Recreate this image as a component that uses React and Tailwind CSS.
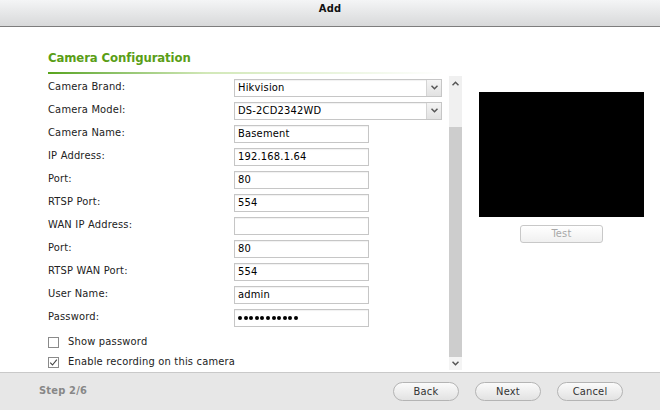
import React from 'react';

const font = { fontFamily: '"DejaVu Sans Condensed", "DejaVu Sans", Verdana, sans-serif' };

const rows = [
  { label: 'Camera Brand:', value: 'Hikvision', select: true },
  { label: 'Camera Model:', value: 'DS-2CD2342WD', select: true },
  { label: 'Camera Name:', value: 'Basement' },
  { label: 'IP Address:', value: '192.168.1.64' },
  { label: 'Port:', value: '80' },
  { label: 'RTSP Port:', value: '554' },
  { label: 'WAN IP Address:', value: '' },
  { label: 'Port:', value: '80' },
  { label: 'RTSP WAN Port:', value: '554' },
  { label: 'User Name:', value: 'admin' },
  { label: 'Password:', value: '', password: true },
];

// small chevron used in the selects and scrollbar
const Chevron = ({ up = false, className = '' }) => (
  <svg width="7" height="5" viewBox="0 0 7 5" className={className}>
    <path
      d={up ? 'M0.5 4.2 L3.5 1.2 L6.5 4.2' : 'M0.5 0.8 L3.5 3.8 L6.5 0.8'}
      fill="none"
      stroke="#555"
      strokeWidth="1.5"
    />
  </svg>
);

const Select = ({ value }) => (
  <div className="flex h-[18px] w-[208px] items-stretch border border-[#c6c6c6] bg-white shadow-[inset_0_1px_1px_rgba(0,0,0,0.06)]">
    <span className="flex-1 pl-[3px] leading-[16px] text-black">{value}</span>
    <span className="flex w-[15px] items-center justify-center border-l border-[#d4d4d4] bg-gradient-to-b from-[#f4f4f4] to-[#e2e2e2]">
      <Chevron />
    </span>
  </div>
);

const Field = ({ value, password }) => (
  <div className="flex h-[18px] w-[135px] items-center border border-[#c6c6c6] bg-white pl-[3px] shadow-[inset_0_1px_1px_rgba(0,0,0,0.06)]">
    {password ? (
      <span className="flex gap-[1.6px]">
        {Array.from({ length: 11 }).map((_, i) => (
          <span key={i} className="h-[4px] w-[4px] rounded-full bg-black" />
        ))}
      </span>
    ) : (
      <span className="leading-[16px] text-black">{value}</span>
    )}
  </div>
);

const Checkbox = ({ checked }) => (
  <span className="flex h-[11px] w-[11px] items-center justify-center border border-[#8a8a8a] bg-white">
    {checked && (
      <svg width="9" height="9" viewBox="0 0 9 9">
        <path d="M1.2 4.6 L3.5 7 L7.8 1.6" fill="none" stroke="#444" strokeWidth="1.1" />
      </svg>
    )}
  </span>
);

const FooterButton = ({ children }) => (
  <button className="h-[19px] w-[66px] rounded-full border border-[#b4b4b4] bg-gradient-to-b from-[#fbfbfb] to-[#e2e2e2] text-[11px] leading-[17px] text-[#333]">
    {children}
  </button>
);

export default function App() {
  return (
    <div className="flex h-[410px] w-[660px] flex-col overflow-hidden bg-white text-[11px] tracking-[0.2px] text-[#222]" style={font}>
      {/* title bar */}
      <div className="h-[27px] shrink-0 border-b border-[#7d7d7d] bg-gradient-to-b from-[#f4f5f6] to-[#d8d9da] pt-[2px] text-center font-bold leading-[14px] text-[#111]">
        Add
      </div>

      <div className="flex-1">
        {/* section heading */}
        <div className="pl-[48px] pt-[24px]">
          <div className="text-[13px] font-bold leading-[14px] tracking-[-0.1px] text-[#5a9e17]">Camera Configuration</div>
          <div className="mt-[7px] h-[2px] w-[395px] bg-gradient-to-r from-[#58a418] via-[#d2e8b8] via-40% to-white" />
        </div>

        <div className="flex items-start">
          {/* form pane */}
          <div className="ml-[48px] flex w-[401px] flex-col pt-[2px]">
            {rows.map((r, i) => (
              <div key={i} className="flex h-[23px] items-center">
                <span className="w-[186px] text-[#222]">{r.label}</span>
                {r.select ? <Select value={r.value} /> : <Field value={r.value} password={r.password} />}
              </div>
            ))}
            <div className="mt-[3px] flex h-[20px] items-center gap-[9px]">
              <Checkbox />
              <span>Show password</span>
            </div>
            <div className="flex h-[20px] items-center gap-[9px]">
              <Checkbox checked />
              <span>Enable recording on this camera</span>
            </div>
          </div>

          {/* scrollbar */}
          <div className="mt-[2px] flex h-[294px] w-[13px] flex-col">
            <div className="flex h-[51px] flex-col items-center bg-[#f0f0f0] pt-[5px]">
              <Chevron up />
            </div>
            <div className="flex-1 bg-[#cdcdcd]" />
            <div className="flex h-[13px] items-center justify-center bg-[#f4f4f4]">
              <Chevron />
            </div>
          </div>

          {/* preview */}
          <div className="ml-[17px] mt-[18px] flex flex-col items-center">
            <div className="h-[125px] w-[165px] bg-black" />
            <button className="mt-[8px] h-[18px] w-[83px] rounded-[3px] border border-[#c8c8c8] bg-gradient-to-b from-white to-[#f0f0f0] text-[11px] leading-[16px] text-[#a8a8a8]">
              Test
            </button>
          </div>
        </div>
      </div>

      {/* footer */}
      <div className="flex h-[38px] shrink-0 items-center border-t border-[#c9c9c9] bg-[#e7e7e7] pl-[39px] pr-[37px]">
        <span className="font-bold text-[#878787]">Step 2/6</span>
        <div className="ml-auto flex gap-[16px]">
          <FooterButton>Back</FooterButton>
          <FooterButton>Next</FooterButton>
          <FooterButton>Cancel</FooterButton>
        </div>
      </div>
    </div>
  );
}
